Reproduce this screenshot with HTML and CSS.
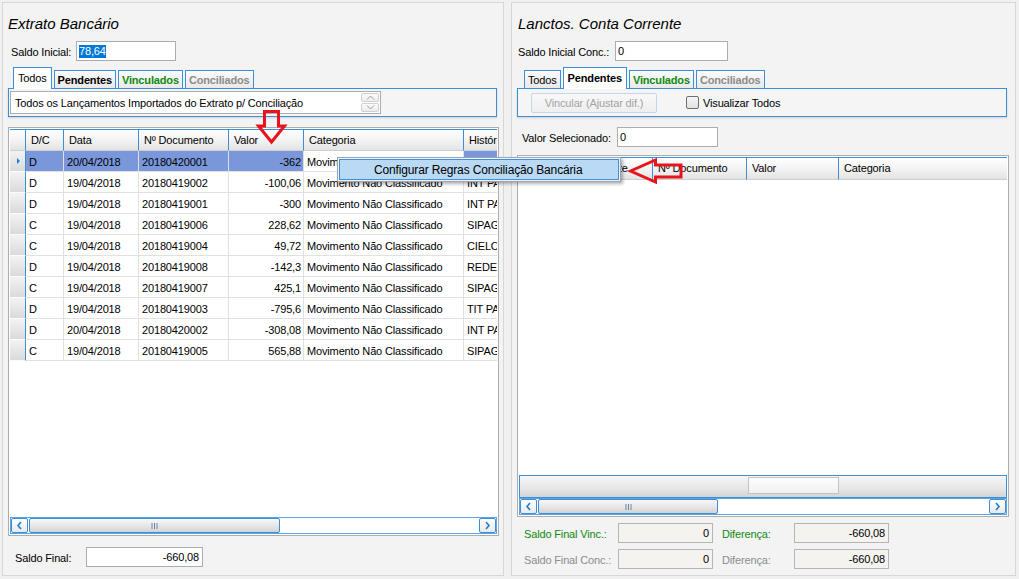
FILE: index.html
```html
<!DOCTYPE html>
<html lang="pt-BR">
<head>
    <meta charset="UTF-8">
    <title>Conciliação Bancária</title>
    <link rel="stylesheet" href="styles.css">
</head>
<body>
<div class="screen">

    <!-- Extrato bancario -->
    <div class="panel panel-left">
        <div class="panel-title">Extrato Bancário</div>
        <div class="field-row saldo-row">
            <span class="lbl lbl-saldo">Saldo Inicial:</span>
            <div class="input input-saldo"><span class="selected-text">78,64</span></div>
        </div>
        <div class="tabs">
            <div class="tab active">Todos</div>
            <div class="tab bold">Pendentes</div>
            <div class="tab bold green">Vinculados</div>
            <div class="tab bold gray">Conciliados</div>
        </div>
        <div class="tab-panel tab-panel-left">
            <div class="memo">
                <span>Todos os Lançamentos Importados do Extrato p/ Conciliação</span>
                <div class="spin">
                    <div class="spin-btn"><svg width="9" height="5" viewBox="0 0 9 5"><polyline points="1,4.5 4.5,1 8,4.5" fill="none" stroke="#9a9a9a" stroke-width="1"/></svg></div>
                    <div class="spin-btn"><svg width="9" height="5" viewBox="0 0 9 5"><polyline points="1,0.5 4.5,4 8,0.5" fill="none" stroke="#9a9a9a" stroke-width="1"/></svg></div>
                </div>
            </div>
        </div>

        <div class="grid grid-left">
            <div class="grid-view">
                <div class="grid-row grid-head">
                    <div class="cell c-ind"></div>
                    <div class="cell c-dc">D/C</div>
                    <div class="cell c-data">Data</div>
                    <div class="cell c-doc">Nº Documento</div>
                    <div class="cell c-val">Valor</div>
                    <div class="cell c-cat">Categoria</div>
                    <div class="cell c-hist">Histórico</div>
                </div>
                <div class="grid-row selected">
                    <div class="cell c-ind"><span class="row-mark"></span></div>
                    <div class="cell c-dc">D</div>
                    <div class="cell c-data">20/04/2018</div>
                    <div class="cell c-doc">20180420001</div>
                    <div class="cell c-val num">-362</div>
                    <div class="cell c-cat">Movimento Não Classificado</div>
                    <div class="cell c-hist">INT PAGTO</div>
                </div>
                <div class="grid-row">
                    <div class="cell c-ind"></div>
                    <div class="cell c-dc">D</div>
                    <div class="cell c-data">19/04/2018</div>
                    <div class="cell c-doc">20180419002</div>
                    <div class="cell c-val num">-100,06</div>
                    <div class="cell c-cat">Movimento Não Classificado</div>
                    <div class="cell c-hist">INT PAGTO</div>
                </div>
                <div class="grid-row">
                    <div class="cell c-ind"></div>
                    <div class="cell c-dc">D</div>
                    <div class="cell c-data">19/04/2018</div>
                    <div class="cell c-doc">20180419001</div>
                    <div class="cell c-val num">-300</div>
                    <div class="cell c-cat">Movimento Não Classificado</div>
                    <div class="cell c-hist">INT PAGTO</div>
                </div>
                <div class="grid-row">
                    <div class="cell c-ind"></div>
                    <div class="cell c-dc">C</div>
                    <div class="cell c-data">19/04/2018</div>
                    <div class="cell c-doc">20180419006</div>
                    <div class="cell c-val num">228,62</div>
                    <div class="cell c-cat">Movimento Não Classificado</div>
                    <div class="cell c-hist">SIPAG</div>
                </div>
                <div class="grid-row">
                    <div class="cell c-ind"></div>
                    <div class="cell c-dc">C</div>
                    <div class="cell c-data">19/04/2018</div>
                    <div class="cell c-doc">20180419004</div>
                    <div class="cell c-val num">49,72</div>
                    <div class="cell c-cat">Movimento Não Classificado</div>
                    <div class="cell c-hist">CIELO</div>
                </div>
                <div class="grid-row">
                    <div class="cell c-ind"></div>
                    <div class="cell c-dc">D</div>
                    <div class="cell c-data">19/04/2018</div>
                    <div class="cell c-doc">20180419008</div>
                    <div class="cell c-val num">-142,3</div>
                    <div class="cell c-cat">Movimento Não Classificado</div>
                    <div class="cell c-hist">REDE</div>
                </div>
                <div class="grid-row">
                    <div class="cell c-ind"></div>
                    <div class="cell c-dc">C</div>
                    <div class="cell c-data">19/04/2018</div>
                    <div class="cell c-doc">20180419007</div>
                    <div class="cell c-val num">425,1</div>
                    <div class="cell c-cat">Movimento Não Classificado</div>
                    <div class="cell c-hist">SIPAG</div>
                </div>
                <div class="grid-row">
                    <div class="cell c-ind"></div>
                    <div class="cell c-dc">D</div>
                    <div class="cell c-data">19/04/2018</div>
                    <div class="cell c-doc">20180419003</div>
                    <div class="cell c-val num">-795,6</div>
                    <div class="cell c-cat">Movimento Não Classificado</div>
                    <div class="cell c-hist">TIT PAGO</div>
                </div>
                <div class="grid-row">
                    <div class="cell c-ind"></div>
                    <div class="cell c-dc">D</div>
                    <div class="cell c-data">20/04/2018</div>
                    <div class="cell c-doc">20180420002</div>
                    <div class="cell c-val num">-308,08</div>
                    <div class="cell c-cat">Movimento Não Classificado</div>
                    <div class="cell c-hist">INT PAGTO</div>
                </div>
                <div class="grid-row">
                    <div class="cell c-ind"></div>
                    <div class="cell c-dc">C</div>
                    <div class="cell c-data">19/04/2018</div>
                    <div class="cell c-doc">20180419005</div>
                    <div class="cell c-val num">565,88</div>
                    <div class="cell c-cat">Movimento Não Classificado</div>
                    <div class="cell c-hist">SIPAG</div>
                </div>
            </div>
            <div class="hscroll">
                <div class="scroll-btn"><svg width="7" height="9" viewBox="0 0 7 9"><polyline points="5,1 2,4.5 5,8" fill="none" stroke="#1c7fd1" stroke-width="1.6"/></svg></div>
                <div class="scroll-thumb thumb-left"><svg width="7" height="6" viewBox="0 0 7 6"><path d="M1 0v6M3.5 0v6M6 0v6" stroke="#6d86a8" stroke-width="1"/></svg></div>
                <div class="scroll-track"></div>
                <div class="scroll-btn"><svg width="7" height="9" viewBox="0 0 7 9"><polyline points="2,1 5,4.5 2,8" fill="none" stroke="#1c7fd1" stroke-width="1.6"/></svg></div>
            </div>
        </div>

        <div class="field-row final-row">
            <span class="lbl lbl-final">Saldo Final:</span>
            <div class="input num input-final">-660,08</div>
        </div>
    </div>

    <!-- Lancamentos conta corrente -->
    <div class="panel panel-right">
        <div class="panel-title">Lanctos. Conta Corrente</div>
        <div class="field-row saldo-row saldo-conc">
            <span class="lbl lbl-conc">Saldo Inicial Conc.:</span>
            <div class="input input-conc">0</div>
        </div>
        <div class="tabs tabs-right">
            <div class="tab">Todos</div>
            <div class="tab active bold">Pendentes</div>
            <div class="tab bold green">Vinculados</div>
            <div class="tab bold gray">Conciliados</div>
        </div>
        <div class="tab-panel tab-panel-right">
            <div class="btn-disabled">Vincular (Ajustar dif.)</div>
            <span class="checkbox"></span>
            <span class="check-label">Visualizar Todos</span>
        </div>
        <div class="field-row valor-row">
            <span class="lbl lbl-valor">Valor Selecionado:</span>
            <div class="input input-valor">0</div>
        </div>

        <div class="grid grid-right">
            <div class="grid-view">
                <div class="grid-row grid-head">
                    <div class="cell c-ind"></div>
                    <div class="cell c-dc">Data</div>
                    <div class="cell c-data">Ajuste</div>
                    <div class="cell c-doc">Nº Documento</div>
                    <div class="cell c-val">Valor</div>
                    <div class="cell c-cat">Categoria</div>
                </div>
            </div>
            <div class="group-footer"><div class="footer-box"></div></div>
            <div class="hscroll">
                <div class="scroll-btn"><svg width="7" height="9" viewBox="0 0 7 9"><polyline points="5,1 2,4.5 5,8" fill="none" stroke="#1c7fd1" stroke-width="1.6"/></svg></div>
                <div class="scroll-thumb thumb-right"><svg width="7" height="6" viewBox="0 0 7 6"><path d="M1 0v6M3.5 0v6M6 0v6" stroke="#6d86a8" stroke-width="1"/></svg></div>
                <div class="scroll-track"></div>
                <div class="scroll-btn"><svg width="7" height="9" viewBox="0 0 7 9"><polyline points="2,1 5,4.5 2,8" fill="none" stroke="#1c7fd1" stroke-width="1.6"/></svg></div>
            </div>
        </div>

        <div class="final-rows">
            <div class="field-row">
                <span class="lbl lbl-final-r green">Saldo Final Vinc.:</span>
                <div class="input num disabled input-small">0</div>
                <span class="lbl lbl-dif green">Diferença:</span>
                <div class="input num disabled input-small">-660,08</div>
            </div>
            <div class="field-row">
                <span class="lbl lbl-final-r gray">Saldo Final Conc.:</span>
                <div class="input num disabled input-small">0</div>
                <span class="lbl lbl-dif gray">Diferença:</span>
                <div class="input num disabled input-small">-660,08</div>
            </div>
        </div>
    </div>

    <!-- Popup menu over the grid -->
    <div class="context-menu">
        <div class="menu-item">Configurar Regras Conciliação Bancária</div>
    </div>

    <!-- Red callout arrows -->
    <svg class="arrow arrow-down" width="40" height="45" viewBox="250 105 40 45">
        <polygon points="264.5,111.5 278.5,111.5 278.5,126 284.5,126 271.5,142 258.5,126 264.5,126" fill="none" stroke="#e8141c" stroke-width="3"/>
    </svg>
    <svg class="arrow arrow-left" width="60" height="30" viewBox="626 156 60 30">
        <polygon points="630.5,171 655.5,160 655.5,165 681,165 681,177 655.5,177 655.5,182" fill="none" stroke="#e8141c" stroke-width="3"/>
    </svg>
</div>
</body>
</html>
```

FILE: styles.css
```css
* {
    box-sizing: border-box;
}

body {
    margin: 0;
    font-family: 'Liberation Sans', Arial, sans-serif;
    font-size: 11px;
    letter-spacing: -0.15px;
    color: #000;
    background-color: #f0f0f0;
}

.screen {
    position: relative;
    width: 1019px;
    height: 579px;
    display: flex;
    gap: 7px;
    padding: 2px 0 0 2px;
}

/* Panels */
.panel {
    height: 574px;
    border: 1px solid #d7d7d7;
    background-color: #f3f3f3;
    display: flex;
    flex-direction: column;
}

.panel-left {
    width: 502px;
}

.panel-right {
    width: 505px;
}

.panel-title {
    margin: 10px 0 0 5px;
    height: 22px;
    line-height: 22px;
    font-size: 15px;
    font-style: italic;
    letter-spacing: 0;
}

.panel-right .panel-title {
    margin-left: 6px;
}

.green {
    color: #108a10;
}

.gray {
    color: #8c8c8c;
}

.bold {
    font-weight: bold;
}

/* Fields */
.field-row {
    display: flex;
    align-items: center;
    height: 20px;
}

.lbl {
    flex-shrink: 0;
    white-space: nowrap;
    padding-top: 1px;
}

.input {
    flex-shrink: 0;
    height: 20px;
    border: 1px solid #abadb3;
    background-color: #fff;
    line-height: 18px;
    padding: 0 2px;
    white-space: nowrap;
    overflow: hidden;
}

.input.num {
    text-align: right;
    padding-right: 3px;
}

.input.disabled {
    background-color: #f4f3f0;
    border-color: #b5b5b5;
}

.saldo-row {
    margin-top: 6px;
    padding-left: 8px;
}

.lbl-saldo {
    width: 65px;
}

.input-saldo {
    width: 100px;
}

.selected-text {
    display: inline-block;
    background-color: #0078d7;
    color: #fff;
    line-height: 13px;
}

.saldo-conc {
    padding-left: 6px;
}

.lbl-conc {
    width: 97px;
}

.input-conc {
    width: 113px;
}

/* Tabs */
.tabs {
    position: relative;
    z-index: 1;
    display: flex;
    align-items: flex-end;
    gap: 2px;
    height: 21px;
    margin-top: 6px;
    padding-left: 10px;
}

.tabs-right {
    padding-left: 12px;
}

.tab {
    height: 18px;
    line-height: 18px;
    padding: 0 3px;
    border: 1px solid #3a8fd6;
    border-bottom: none;
    background: linear-gradient(#fbfbfb, #e9e9e9);
    white-space: nowrap;
}

.tab.active {
    height: 22px;
    margin-bottom: -1px;
    line-height: 21px;
    padding: 0 4px;
    background: #fff;
}

.tab-panel {
    width: 490px;
    height: 29px;
    margin-left: 5px;
    border: 1px solid #3a8fd6;
    background-color: #f5f5f5;
    box-shadow: 0 1px 2px rgba(0, 0, 0, 0.15);
}

.tab-panel-left {
    width: 489px;
    padding: 2px 1px 1px 1px;
}

.memo {
    width: 371px;
    height: 23px;
    border: 1px solid #abadb3;
    background-color: #fff;
    display: flex;
    align-items: center;
    justify-content: space-between;
    padding: 0 1px 0 4px;
}

.spin {
    display: flex;
    flex-direction: column;
    gap: 1px;
}

.spin-btn {
    width: 18px;
    height: 9px;
    border: 1px solid #cfcfcf;
    border-radius: 2px;
    background: linear-gradient(#fcfcfc, #ececec);
    display: flex;
    align-items: center;
    justify-content: center;
}

.tab-panel-right {
    display: flex;
    align-items: center;
    padding-left: 13px;
}

.btn-disabled {
    width: 126px;
    height: 20px;
    line-height: 18px;
    text-align: center;
    color: #a3a3a3;
    border: 1px solid #c4d6e8;
    border-radius: 2px;
    background: linear-gradient(#f8f8f8, #efefef);
}

.checkbox {
    width: 13px;
    height: 13px;
    margin-left: 29px;
    border: 1px solid #707070;
    border-radius: 2px;
    background: linear-gradient(#f4f4f4, #e2e2e2);
}

.check-label {
    margin-left: 4px;
}

.valor-row {
    margin-top: 10px;
    padding-left: 10px;
}

.lbl-valor {
    width: 95px;
}

.input-valor {
    width: 101px;
}

/* Grids */
.grid {
    margin-left: 5px;
    border: 1px solid #adadad;
    background-color: #fff;
    padding: 1px;
    display: flex;
    flex-direction: column;
}

.grid-left {
    width: 491px;
    height: 409px;
    margin-top: 10px;
}

.grid-right {
    width: 492px;
    height: 362px;
    margin-top: 8px;
}

.grid-view {
    flex: 1;
    overflow: hidden;
}

.grid-row {
    display: flex;
    height: 21px;
}

.cell {
    flex-shrink: 0;
    padding: 1px 3px 0 3px;
    line-height: 20px;
    border-right: 1px solid #e1e1e1;
    border-bottom: 1px solid #e1e1e1;
    white-space: nowrap;
    overflow: hidden;
}

.cell.num {
    text-align: right;
    padding-right: 2px;
}

.c-ind {
    width: 16px;
    border-right-color: #3a8fd6;
    border-bottom-color: #fafafa;
    background: linear-gradient(#f3f3f3, #dadada);
}

.c-dc {
    width: 38px;
}

.c-data {
    width: 75px;
}

.c-doc {
    width: 90px;
}

.c-val {
    width: 75px;
}

.c-cat {
    width: 160px;
}

.c-hist {
    width: 90px;
}

.grid-right .c-dc {
    width: 58px;
}

.grid-right .c-data {
    width: 60px;
}

.grid-right .c-doc {
    width: 94px;
}

.grid-right .c-val {
    width: 92px;
}

.grid-right .c-cat {
    width: 240px;
}

.grid-head {
    height: 22px;
}

.grid-head .cell {
    padding: 0 3px 0 5px;
    line-height: 20px;
    border-top: 1px solid #3a8fd6;
    border-right-color: #3a8fd6;
    border-bottom-color: #cfcfcf;
    background: linear-gradient(#ffffff, #f2f2f2 55%, #e3e3e3);
}

.grid-right .grid-head {
    height: 23px;
}

.grid-right .grid-head .cell {
    line-height: 21px;
}

.selected .cell {
    background-color: #7b97dc;
}

.selected .c-ind {
    background: linear-gradient(#f3f3f3, #dadada);
}

.selected .c-cat {
    background-color: #fff;
}

.row-mark {
    display: block;
    width: 0;
    height: 0;
    margin: 6px 0 0 4px;
    border-top: 3px solid transparent;
    border-bottom: 3px solid transparent;
    border-left: 3px solid #1b7fd0;
}

.group-footer {
    height: 23px;
    border: 1px solid #3a8fd6;
    background: linear-gradient(#f7f7f7, #e6e6e6 60%, #d4d4d4);
    padding: 1px 0 0 228px;
}

.footer-box {
    width: 91px;
    height: 17px;
    border: 1px solid #c3c3c3;
    background: linear-gradient(#fdfdfd, #f0f0f0);
}

/* Scrollbars */
.hscroll {
    height: 17px;
    display: flex;
    border: 1px solid #5aa6e4;
    background-color: #fff;
}

.scroll-btn {
    width: 17px;
    border: 1px solid #3a8fd6;
    border-radius: 2px;
    background: linear-gradient(#ffffff, #e9e9e9);
    display: flex;
    align-items: center;
    justify-content: center;
}

.scroll-thumb {
    margin-left: 1px;
    border: 1px solid #3a8fd6;
    border-radius: 2px;
    background: linear-gradient(#f8f8f8, #e4e4e4 60%, #d2d2d2);
    display: flex;
    align-items: center;
    justify-content: center;
}

.thumb-left {
    width: 251px;
}

.thumb-right {
    width: 180px;
}

.scroll-track {
    flex: 1;
}

/* Bottom totals */
.final-row {
    margin-top: 11px;
    padding-left: 12px;
}

.lbl-final {
    width: 71px;
}

.input-final {
    width: 117px;
}

.final-rows {
    margin-top: 6px;
    padding-left: 12px;
    display: flex;
    flex-direction: column;
    gap: 6px;
}

.lbl-final-r {
    width: 94px;
}

.lbl-dif {
    width: 72px;
    margin-left: 9px;
}

.input-small {
    width: 95px;
}

/* Context menu */
.context-menu {
    position: absolute;
    left: 337px;
    top: 157px;
    width: 284px;
    height: 25px;
    padding: 1px;
    border: 1px solid #9aa6b4;
    background-color: #f2f2f2;
    box-shadow: 2px 2px 3px rgba(0, 0, 0, 0.3);
}

.menu-item {
    height: 100%;
    padding-left: 34px;
    line-height: 20px;
    font-size: 12px;
    border: 1px solid #3f90dc;
    background-color: #b9d9f5;
}

.arrow {
    position: absolute;
}

.arrow-down {
    left: 250px;
    top: 105px;
}

.arrow-left {
    left: 626px;
    top: 156px;
}
```
